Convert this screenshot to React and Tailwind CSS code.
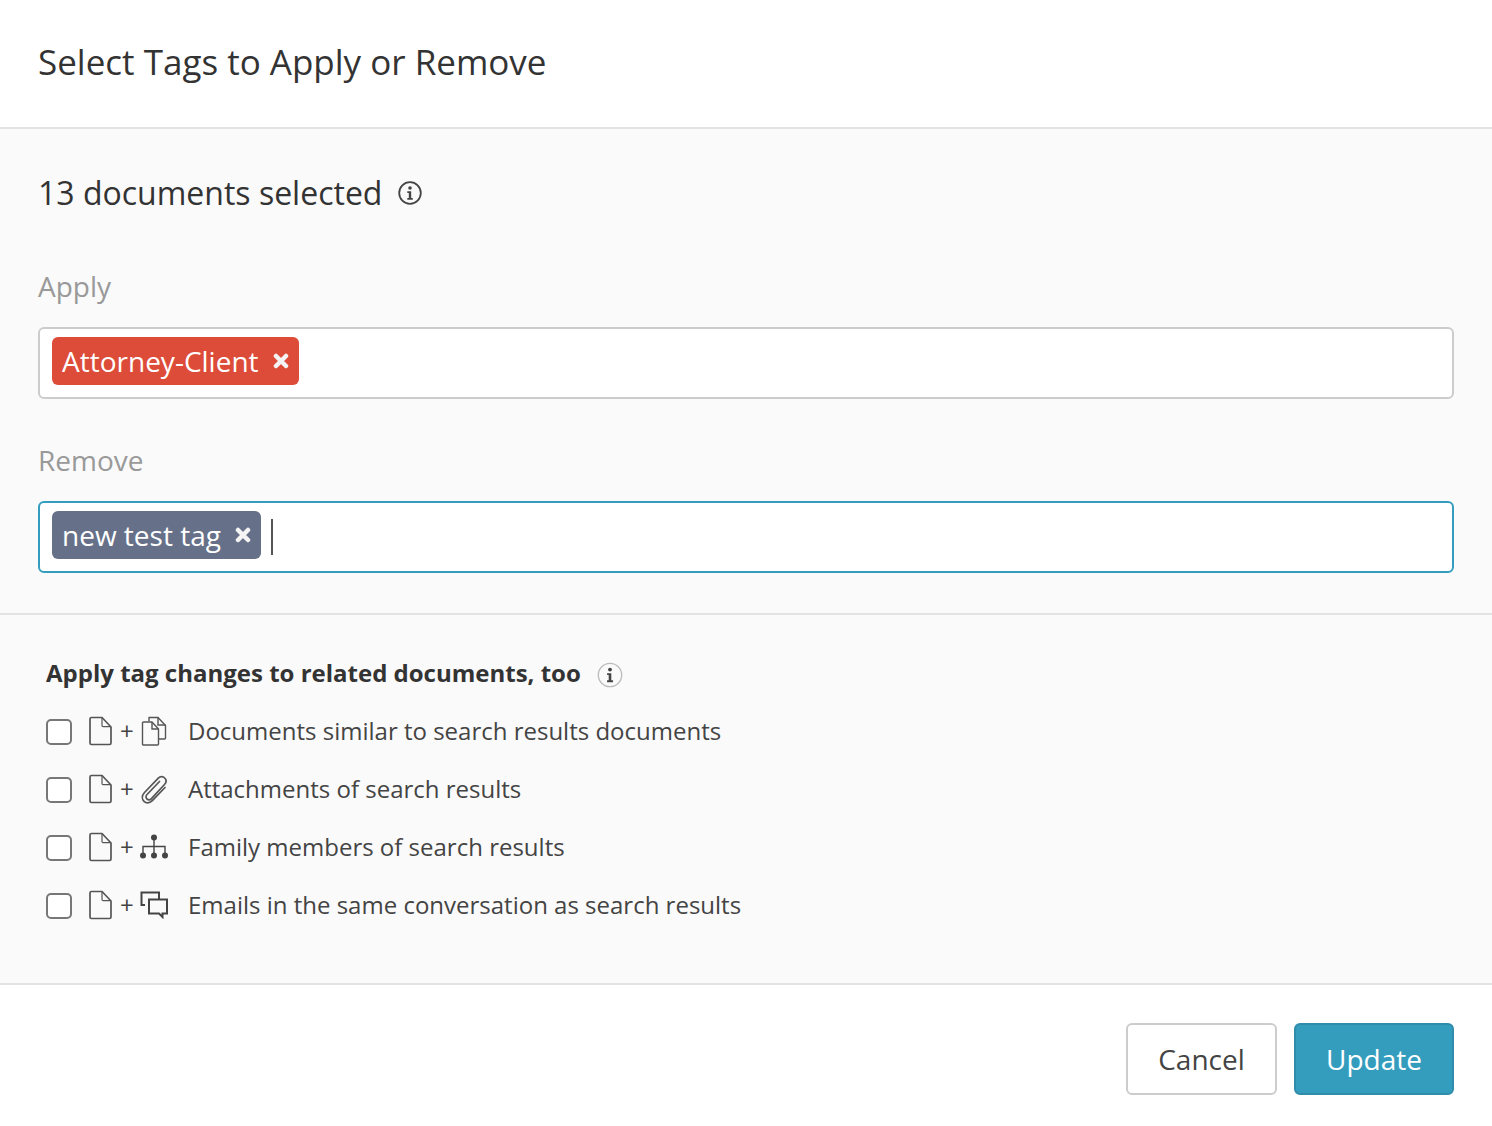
import React from 'react';

const FileIcon = () => (
  <svg width="24" height="30" viewBox="0 0 24 30" fill="none" stroke="#555" strokeWidth="1.7" className="shrink-0">
    <path d="M3.500 1.500H14L23 11v16a1.500 1.500 0 0 1-1.500 1.500h-18A1.500 1.500 0 0 1 2 27V3a1.500 1.500 0 0 1 1.500-1.500z" strokeLinejoin="round" />
    <path d="M14 1.500V9.500a1.200 1.200 0 0 0 1.200 1.200H23" strokeWidth="1.200" />
  </svg>
);

const CopiesIcon = () => (
  <svg width="26" height="30" viewBox="0 0 26 30" fill="none" stroke="#555" strokeWidth="1.4">
    <path d="M8 5.500V1.500h9l7.500 8v12.500a1 1 0 0 1-1 1H18" strokeLinejoin="round" />
    <path d="M17 1.500v7.500h7.500" />
    <path d="M2.500 6h8.500l6.500 7v15a1 1 0 0 1-1 1H2.500a1 1 0 0 1-1-1V7a1 1 0 0 1 1-1z" fill="#fafafa" strokeLinejoin="round" />
    <path d="M11 6v7h6.500" />
  </svg>
);

const ClipIcon = () => (
  <svg width="28" height="30" viewBox="0 0 28 30" fill="none" stroke="#555" strokeWidth="1.700" strokeLinecap="round">
    <path d="M19.500 7.500 7 20.500c-1.800 2-.8 3.800 0 4.500s2.500 1.500 4.200-.2L24.500 10.500c2.200-2.400 1.700-5 .2-6.500s-4.200-2-6.400.2L4.500 18.500c-3.300 3.600-2.300 7-.5 8.800s5.200 2.500 8.300-.7L25 13.500" />
  </svg>
);

const TreeIcon = () => (
  <svg width="28" height="26" viewBox="0 0 28 26" fill="#444" stroke="#444" strokeWidth="1.400">
    <circle cx="14" cy="3.500" r="3" stroke="none" />
    <path d="M14 5v17M3 20v-7.500h22V20" fill="none" />
    <circle cx="3" cy="21.500" r="3" stroke="none" />
    <circle cx="14" cy="21.500" r="3" stroke="none" />
    <circle cx="25" cy="21.500" r="3" stroke="none" />
  </svg>
);

const ChatIcon = () => (
  <svg width="28" height="28" viewBox="0 0 28 28" fill="none" stroke="#444" strokeWidth="2">
    <path d="M5 14H1.500V1.500H19V8" />
    <path d="M9 8.500h18v14h-4.500v3.500l-3.500-3.500H9z" fill="#fafafa" />
  </svg>
);

const InfoIcon = ({ outer = '#444', size = 24, ring = 1.8 }) => (
  <svg width={size} height={size} viewBox="0 0 24 24" fill="none">
    <circle cx="12" cy="12" r="10.800" stroke={outer} strokeWidth={ring} />
    <circle cx="12" cy="7" r="1.800" fill="#444" />
    <path d="M9.300 10.300h3.900v6.600h1.600v1.800H9.300v-1.800h1.500v-4.800H9.300z" fill="#444" />
  </svg>
);

const CloseX = () => (
  <svg width="16" height="16" viewBox="0 0 16 16" stroke="#f4f4f4" strokeWidth="4.500" strokeLinecap="round" className="shrink-0">
    <path d="M3 3l10 10M13 3L3 13" />
  </svg>
);

const Tag = ({ label, color }) => (
  <span className={`flex items-center h-12 -mt-1 rounded-md pl-[10px] pr-[10px] gap-[14px] text-white text-[28px] ${color}`}>
    {label}
    <CloseX />
  </span>
);

const rows = [
  { text: 'Documents similar to search results documents', icon: <CopiesIcon /> },
  { text: 'Attachments of search results', icon: <ClipIcon /> },
  { text: 'Family members of search results', icon: <TreeIcon /> },
  { text: 'Emails in the same conversation as search results', icon: <ChatIcon /> },
];

export default function App() {
  return (
    <div className="w-[1492px] h-[1126px] bg-white text-[#333] font-['Open_Sans',sans-serif] overflow-hidden">
      <header className="h-[129px] border-b-2 border-[#e3e3e3] pl-[38px] pt-[37px]">
        <h1 className="text-[35px] leading-[50px] font-normal">Select Tags to Apply or Remove</h1>
      </header>

      <section className="h-[486px] bg-[#fafafa] border-b-2 border-[#e3e3e3] px-[38px] pt-[39px]">
        <div className="flex items-center gap-4 h-[50px]">
          <span className="text-[32px] leading-[50px]">13 documents selected</span>
          <InfoIcon />
        </div>
        <label className="block mt-[43px] text-[28px] leading-[50px] text-[#999]">Apply</label>
        <div className="mt-[16px] h-[72px] flex items-center pl-3 bg-white border-2 border-[#ccc] rounded-md">
          <Tag label="Attorney-Client" color="bg-[#dd4b39]" />
        </div>
        <label className="block mt-[36px] text-[28px] leading-[50px] text-[#999]">Remove</label>
        <div className="mt-[16px] h-[72px] flex items-center gap-[10px] pl-3 bg-white border-2 border-[#349dbe] rounded-md">
          <Tag label="new test tag" color="bg-[#667189]" />
          <span className="w-[2px] h-[36px] bg-[#555]" />
        </div>
      </section>

      <section className="h-[370px] bg-[#fafafa] border-b-2 border-[#e3e3e3] pl-[46px] pt-[40px]">
        <div className="flex items-center gap-[16px] h-9">
          <span className="text-[24px] font-bold">Apply tag changes to related documents, too</span>
          <span className="mt-1"><InfoIcon outer="#bbb" size={26} ring={1.2} /></span>
        </div>
        <ul className="mt-[11px]">
          {rows.map((row) => (
            <li key={row.text} className="flex items-center h-[58px]">
              <span className="w-[26px] h-[26px] mt-[2px] bg-white border-2 border-[#777] rounded-[5px] shrink-0" />
              <span className="ml-[16px]"><FileIcon /></span>
              <span className="w-[20px] ml-[8px] text-[24px] text-[#444]">+</span>
              <span className="w-[28px] flex justify-center">{row.icon}</span>
              <span className="ml-[20px] text-[24px] text-[#444]">{row.text}</span>
            </li>
          ))}
        </ul>
      </section>

      <footer className="flex justify-end gap-[17px] pr-[38px] pt-[38px]">
        <button className="w-[151px] h-[72px] bg-white border-2 border-[#ccc] rounded-md text-[28px] text-[#444]">Cancel</button>
        <button className="w-[160px] h-[72px] bg-[#349dbe] border-2 border-[#2f8dab] rounded-md text-[28px] text-white">Update</button>
      </footer>
    </div>
  );
}
